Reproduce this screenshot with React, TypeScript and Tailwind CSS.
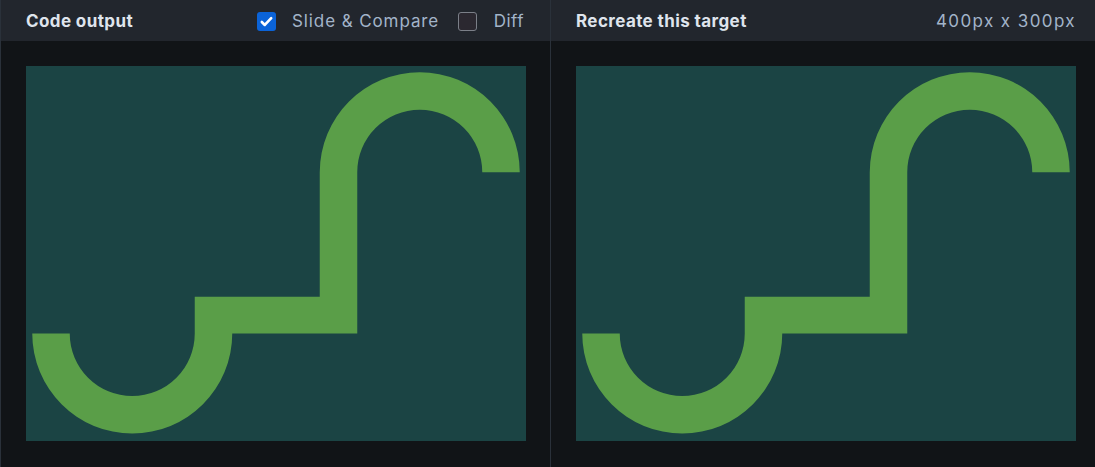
import React from "react";

function Shape() {
  return (
    <svg width="500" height="375" viewBox="0 0 400 300" className="block">
      <rect width="400" height="300" fill="#1b4444" />
      <path
        d="M5,214 A80,80 0 0 0 165,214 L265,214 L265,85 A50,50 0 0 1 365,85 L395,85 A80,80 0 0 0 235,85 L235,184.5 L135,184.5 L135,214 A50,50 0 0 1 35,214 Z"
        fill="#5a9e48"
      />
    </svg>
  );
}

export default function App() {
  const font = { fontFamily: "Inter, 'Noto Sans', sans-serif" };
  return (
    <div className="w-[1095px] h-[467px] bg-[#111417] flex overflow-hidden" style={font}>
      <div className="w-[550px] shrink-0 border-l border-[#2a313a] flex flex-col">
        <div className="h-[41px] bg-[#22262d] flex items-center pl-[25px]">
          <span className="mt-[2px] text-[17px] font-bold text-[#dfe4ec] tracking-[0.4px]">Code output</span>
          <span className="ml-[124px] mt-[1px] w-[19px] h-[19px] rounded-[3px] bg-[#0b63d8] flex items-center justify-center">
            <svg width="15" height="15" viewBox="0 0 16 16" fill="none" stroke="white" strokeWidth="2.8" strokeLinecap="round" strokeLinejoin="round">
              <path d="M3 8.5l3.2 3.2L13 4.5" />
            </svg>
          </span>
          <span className="ml-[16px] mt-[2px] text-[17px] text-[#a3b4c9] tracking-[0.9px] whitespace-nowrap">Slide &amp; Compare</span>
          <span className="ml-auto mt-[1px] w-[19px] h-[19px] rounded-[3px] bg-[#2b2830] border border-[#7b7f88]" />
          <span className="ml-[17px] mr-[26px] mt-[2px] text-[17px] text-[#a3b4c9] tracking-[0.5px]">Diff</span>
        </div>
        <div className="p-[25px]">
          <Shape />
        </div>
      </div>
      <div className="w-[545px] shrink-0 border-l border-[#2a313a] flex flex-col">
        <div className="h-[41px] bg-[#22262d] flex items-center pl-[25px] pr-[19px]">
          <span className="mt-[2px] text-[17px] font-bold text-[#dfe4ec] tracking-[0.4px]">Recreate this target</span>
          <span className="ml-auto mt-[2px] text-[17px] text-[#a3b4c9] tracking-[1.4px]">400px x 300px</span>
        </div>
        <div className="p-[25px]">
          <Shape />
        </div>
      </div>
    </div>
  );
}
